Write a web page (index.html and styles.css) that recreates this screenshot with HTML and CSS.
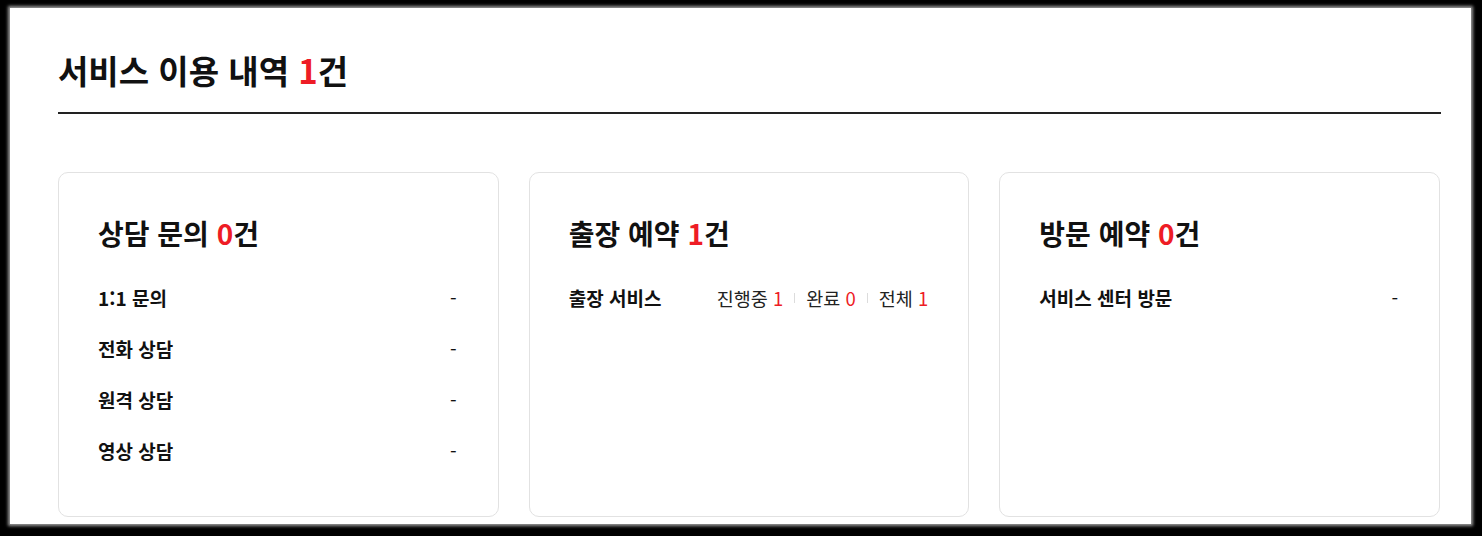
FILE: index.html
```html
<html lang="ko">

<head>
  <meta charset="UTF-8">
  <meta name="viewport" content="width=device-width, initial-scale=1.0">
  <title>서비스 이용 내역</title>
  <link rel="stylesheet" href="styles.css">
</head>

<body>

  <div class="panel">
    <div class="page-head">
      <h2 class="page-title">서비스 이용 내역 <em>1</em>건</h2>
    </div>

    <div class="card-list">
      <!-- 상담 문의 -->
      <div class="card">
        <h3 class="card-title">상담 문의 <em>0</em>건</h3>
        <ul class="rows">
          <li><strong>1:1 문의</strong><span class="value">-</span></li>
          <li><strong>전화 상담</strong><span class="value">-</span></li>
          <li><strong>원격 상담</strong><span class="value">-</span></li>
          <li><strong>영상 상담</strong><span class="value">-</span></li>
        </ul>
      </div>

      <!-- 출장 예약 -->
      <div class="card">
        <h3 class="card-title">출장 예약 <em>1</em>건</h3>
        <ul class="rows">
          <li>
            <strong>출장 서비스</strong>
            <span class="stats">
              <span>진행중 <em>1</em></span>
              <i class="sep"></i>
              <span>완료 <em>0</em></span>
              <i class="sep"></i>
              <span>전체 <em>1</em></span>
            </span>
          </li>
        </ul>
      </div>

      <!-- 방문 예약 -->
      <div class="card">
        <h3 class="card-title">방문 예약 <em>0</em>건</h3>
        <ul class="rows">
          <li><strong>서비스 센터 방문</strong><span class="value">-</span></li>
        </ul>
      </div>
    </div>
  </div>

</body>

</html>
```

FILE: styles.css
```css
* {
  padding: 0;
  margin: 0;
  box-sizing: border-box;
}

body {
  background-color: #000;
  font-family: "Noto Sans CJK KR", "Noto Sans", sans-serif;
  color: #111;
  padding: 8px 11px 12px 10px;
}

em {
  font-style: normal;
  color: #ee1c25;
}

.panel {
  height: 516px;
  background-color: #fff;
  padding: 39px 30px 0 48px;
  box-shadow: 0 0 3px 2px #9a9a9a;
  overflow: hidden;
}

.page-head {
  padding-bottom: 19px;
  border-bottom: 2px solid #222;
}

.page-title {
  font-size: 33px;
  line-height: 46px;
  font-weight: 700;
}

.card-list {
  display: flex;
  gap: 30px;
  margin-top: 58px;
  padding-right: 1px;
}

.card {
  flex: 1;
  height: 345px;
  border: 1px solid #e2e2e2;
  border-radius: 10px;
  padding: 40px 40px 0 39px;
}

.card-title {
  font-size: 28px;
  line-height: 40px;
  font-weight: 700;
  margin-bottom: 19px;
}

.rows {
  list-style: none;
}

.rows li {
  height: 51px;
  display: flex;
  justify-content: space-between;
  align-items: center;
  font-size: 19px;
}

.rows strong {
  font-weight: 700;
}

.rows .value {
  padding-right: 1px;
}

.stats {
  display: flex;
  align-items: center;
  color: #222;
  font-size: 18.5px;
}

.stats .sep {
  width: 1px;
  height: 10px;
  background-color: #dcdcdc;
  margin: 0 11px;
}
```
